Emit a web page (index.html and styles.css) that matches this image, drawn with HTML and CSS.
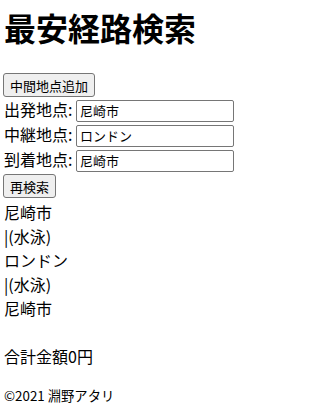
FILE: index.html
```html
<!DOCTYPE html>
<html lang="ja">
<head>
<meta charset="utf-8">
<title>最安経路検索</title>
<link rel="stylesheet" href="styles.css">
</head>
<body>
<div class="app">
  <h1 class="title">最安経路検索</h1>
  <button class="btn">中間地点追加</button>
  <div class="row">出発地点: <input class="field" type="text" value="尼崎市"></div>
  <div class="row">中継地点: <input class="field" type="text" value="ロンドン"></div>
  <div class="row">到着地点: <input class="field" type="text" value="尼崎市"></div>
  <button class="btn btn-search">再検索</button>
  <div class="route">
    <div class="stop">尼崎市</div>
    <div class="leg">|(水泳)</div>
    <div class="stop">ロンドン</div>
    <div class="leg">|(水泳)</div>
    <div class="stop">尼崎市</div>
  </div>
  <p class="total">合計金額0円</p>
  <footer class="footer">©2021 淵野アタリ</footer>
</div>
</body>
</html>
```
FILE: styles.css
```css
html, body {
  margin: 0;
  padding: 0;
  background: #ffffff;
}
body {
  font-family: "Noto Sans CJK JP", "Noto Sans", sans-serif;
  font-size: 16px;
  color: #000000;
}
.app {
  padding: 4px;
}
.title {
  font-size: 32px;
  font-weight: bold;
  margin: 0 0 23px 0;
}
.btn {
  display: block;
  font-family: "Noto Sans CJK JP", "Noto Sans", sans-serif;
  font-size: 13px;
  height: 24px;
  box-sizing: border-box;
  background: #efefef;
  border: 1px solid #767676;
  border-radius: 3px;
  padding: 0 6px;
  color: #000000;
  margin: 0 0 0 -1px;
}
.btn-search {
  margin-top: 2px;
}
.row {
  display: block;
  height: 25px;
}
.field {
  font-family: "Noto Sans CJK JP", "Noto Sans", sans-serif;
  font-size: 13px;
  width: 158px;
  height: 22px;
  box-sizing: border-box;
  border: 1px solid #767676;
  border-radius: 2px;
  padding: 1px 3px;
  margin: 0;
  color: #000000;
}
.route {
  margin-top: 2px;
}
.total {
  margin: 24px 0 0 0;
}
.footer {
  font-size: 13.333px;
  margin-top: 18px;
}
```
